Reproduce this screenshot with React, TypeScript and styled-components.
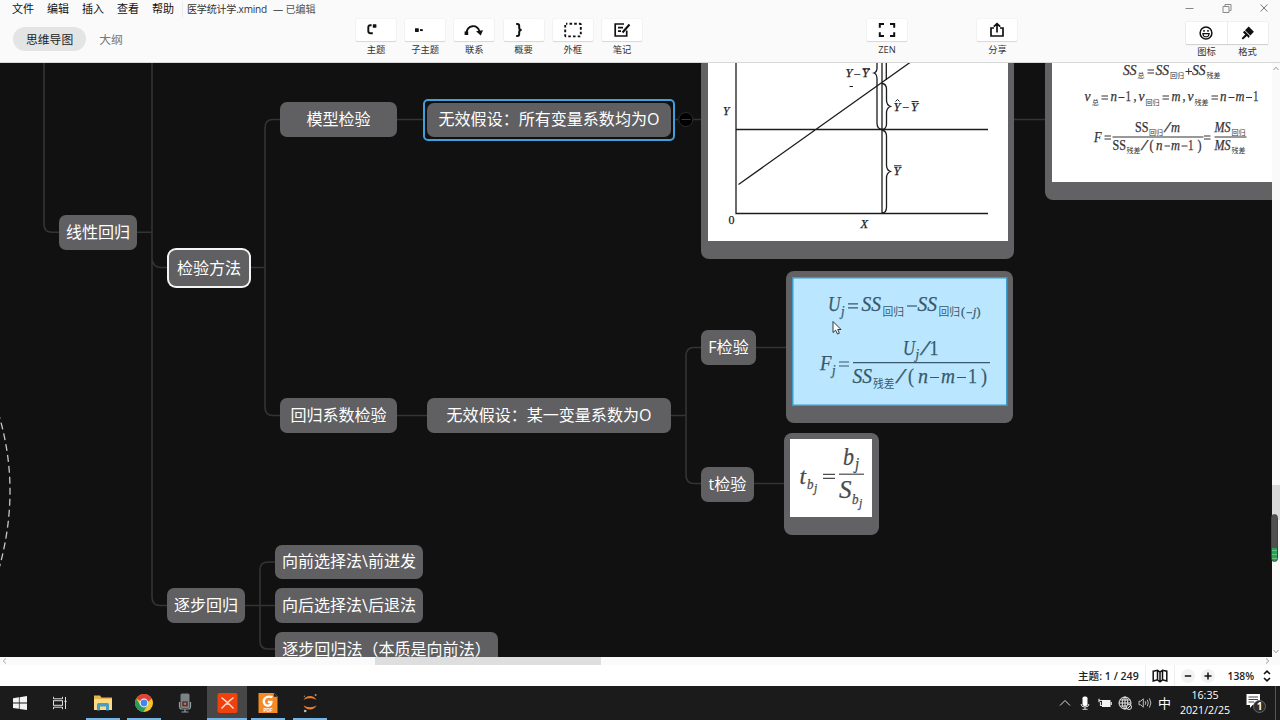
import React from "react";
import styled, { createGlobalStyle, css } from "styled-components";

const Global = createGlobalStyle`
  * { box-sizing: border-box; }
  body {
    margin: 0;
    background: #fff;
    overflow: hidden;
    font-family: "Open Sans", "Noto Sans CJK SC", sans-serif;
  }
  svg { display: block; flex: none; }
`;

const Window = styled.div`
  width: 1280px;
  height: 720px;
  display: flex;
  flex-direction: column;
  overflow: hidden;
  background: #fbfbfb;
`;

/* ---------- header ---------- */

const Header = styled.header`
  height: 63px;
  flex: none;
  display: flex;
  background: #fafafa;
  border-bottom: 1px solid #d9d9d9;
`;

const HeaderLeft = styled.div`
  width: 356px;
  display: flex;
  flex-direction: column;
`;

const MenuRow = styled.nav`
  height: 18px;
  padding-left: 12px;
  display: flex;
  align-items: center;
  gap: 13px;
  font-size: 11px;
  line-height: 16px;
  color: #111;
  white-space: nowrap;
`;

const MenuItem = styled.span`
  width: 22px;
`;

const FileTitle = styled.span`
  display: flex;
  gap: 6px;
  margin-left: -5px;
  padding-left: 4px;
  border-left: 1px solid #ececec;
  font-size: 10.1px;
  letter-spacing: -0.25px;
  color: #333;
`;

const Edited = styled.span`
  color: #555;
  letter-spacing: -0.1px;
`;

const TabRow = styled.div`
  display: flex;
  align-items: center;
  padding: 9px 0 0 13px;
`;

const Tab = styled.span<{ $active?: boolean }>`
  height: 24px;
  line-height: 24px;
  padding: 0 13px;
  border-radius: 12px;
  font-size: 11.8px;
  color: ${(p) => (p.$active ? "#1c1c1c" : "#777")};
  background: ${(p) => (p.$active ? "#e3e5e4" : "transparent")};
`;

const ToolGroup = styled.div<{ $ml?: number }>`
  display: flex;
  gap: 9.2px;
  padding-top: 19px;
  margin-left: ${(p) => p.$ml ?? 0}px;
`;

const Tool = styled.div`
  width: 40px;
  display: flex;
  flex-direction: column;
  align-items: center;
  gap: 2px;
`;

const ToolButton = styled.div`
  width: 40px;
  height: 22px;
  display: flex;
  align-items: center;
  justify-content: center;
  background: #fff;
  border-radius: 1px;
  box-shadow: 0 0 1px rgba(0, 0, 0, 0.22), 0 1px 1px rgba(0, 0, 0, 0.12);
`;

const ToolLabel = styled.span`
  font-size: 9.3px;
  line-height: 14px;
  color: #333;
  white-space: nowrap;
`;

const HeaderRight = styled.div`
  margin-left: auto;
  width: 99px;
  padding-right: 12px;
  display: flex;
  flex-direction: column;
`;

const WindowControls = styled.div`
  height: 22px;
  padding: 3px 0 0 4px;
  display: flex;
  justify-content: space-between;
  margin-right: -1px;
`;

const Pair = styled.div`
  width: 82px;
  height: 21.5px;
  margin-left: 5px;
  display: flex;
  background: #fff;
  box-shadow: 0 0 1px rgba(0, 0, 0, 0.22), 0 1px 1px rgba(0, 0, 0, 0.12);
`;

const PairCell = styled.div`
  flex: 1;
  display: flex;
  align-items: center;
  justify-content: center;
  & + & { border-left: 1px solid #ececec; }
`;

const PairLabels = styled.div`
  width: 82px;
  margin: 1px 0 0 5px;
  display: flex;
  justify-content: space-around;
`;

/* ---------- canvas ---------- */

const Main = styled.main`
  display: flex;
  height: 594px;
  flex: none;
`;

const Canvas = styled.div`
  position: relative;
  width: 1272px;
  height: 594px;
  overflow: hidden;
  background: #111;
`;

const Layer = styled.svg`
  position: absolute;
  left: 0;
  top: 0;
`;

type Box = { $x: number; $y: number; $w: number; $h: number };

const Node = styled.div<Box & { $ring?: "white" | "blue" }>`
  position: absolute;
  left: ${(p) => p.$x}px;
  top: ${(p) => p.$y - 63}px;
  width: ${(p) => p.$w}px;
  height: ${(p) => p.$h}px;
  display: flex;
  align-items: center;
  justify-content: center;
  border-radius: 7px;
  background: #606062;
  color: #fff;
  font-size: 16.05px;
  line-height: 24px;
  padding-bottom: 1px;
  white-space: nowrap;
  ${(p) => p.$ring === "white" && css`box-shadow: 0 0 0 2px #f4f4f4;`}
  ${(p) =>
    p.$ring === "blue" &&
    css`
      &::after {
        content: "";
        position: absolute;
        inset: -4px;
        border: 2px solid #3fa0dc;
        border-radius: 5px;
      }
    `}
`;

const PictureNode = styled.div<Box & { $pl?: number }>`
  position: absolute;
  left: ${(p) => p.$x}px;
  top: ${(p) => p.$y - 63}px;
  width: ${(p) => p.$w}px;
  height: ${(p) => p.$h}px;
  border-radius: 8px;
  background: #626264;
  padding: 6px 6px 0 ${(p) => p.$pl ?? 6.5}px;
`;

const VScroll = styled.div`
  width: 8px;
  display: flex;
  flex-direction: column;
  align-items: center;
  padding: 3px 0;
  background: #fafafa;
`;

const VThumb = styled.div`
  width: 8px;
  height: 35px;
  flex: none;
  margin: 414px 0 auto;
  background: #dadada;
`;

const Meter = styled.div`
  position: absolute;
  left: 1271px;
  top: 514px;
  width: 7px;
  height: 48px;
  border-radius: 4px;
  background: linear-gradient(#505050 0 33px, #2f9e55 33px 35px, #62c183 35px 36px, #2f9e55 36px 39px, #62c183 39px 40px, #2f9e55 40px 43px, #62c183 43px 44px, #2f9e55 44px);
  border: 1px solid #444;
`;

const HScroll = styled.div`
  height: 8px;
  flex: none;
  display: flex;
  align-items: center;
  justify-content: space-between;
  padding: 0 10px 0 2px;
  background: #fafafa;
`;

const HThumb = styled.div`
  width: 226px;
  height: 8px;
  margin-left: -297px;
  background: #dedede;
`;

/* ---------- status bar ---------- */

const StatusBar = styled.div`
  height: 21px;
  flex: none;
  display: flex;
  justify-content: flex-end;
  align-items: center;
  background: #fff;
  color: #222;
  font-size: 10.6px;
  font-weight: 600;
`;

const Count = styled.span`
  height: 21px;
  line-height: 22px;
  width: 68px;
  border-right: 1px solid #eee;
  white-space: nowrap;
`;

const CountLabel = styled.span`
  font-weight: 500;
`;

const MapCell = styled.span`
  width: 29px;
  height: 21px;
  display: flex;
  align-items: center;
  justify-content: center;
  border-right: 1px solid #eee;
`;

const Zoomer = styled.div`
  width: 105px;
  display: flex;
  align-items: center;
  padding-left: 6px;
`;

const Round = styled.span`
  width: 14px;
  height: 14px;
  margin-right: 6px;
  display: flex;
  align-items: center;
  justify-content: center;
  border-radius: 50%;
  background: #f2f2f2;
`;

const Percent = styled.span`
  width: 34px;
  margin-left: 6.5px;
  font-size: 10.3px;
`;

/* ---------- taskbar ---------- */

const Taskbar = styled.footer`
  height: 34px;
  flex: none;
  display: flex;
  background: #1b1b1b;
  color: #fff;
`;

const TaskButton = styled.div<{ $w: number; $ml?: number; $open?: boolean; $active?: boolean }>`
  width: ${(p) => p.$w}px;
  margin-left: ${(p) => p.$ml ?? 0}px;
  display: flex;
  align-items: center;
  justify-content: center;
  background: ${(p) => (p.$active ? "#474747" : "transparent")};
  border-bottom: 2px solid ${(p) => (p.$open ? "#76b5e6" : "transparent")};
  padding-top: 2px;
`;

const Tray = styled.div`
  margin-left: auto;
  display: flex;
  align-items: center;
`;

const TrayItem = styled.span<{ $w?: number }>`
  width: ${(p) => p.$w ?? 20}px;
  display: flex;
  justify-content: center;
  font-size: 13px;
  line-height: 20px;
`;

const Clock = styled.div`
  width: 62px;
  text-align: center;
  font-size: 10.6px;
  line-height: 15px;
`;

const Edge = styled.div`
  width: 5px;
  height: 34px;
  border-left: 1px solid #555;
`;

/* ---------- formula text ---------- */

type GlyphProps = {
  x: number;
  y: number;
  w: number;
  s: number;
  r?: boolean;
  cjk?: boolean;
  children: string;
};

const G = ({ x, y, w, s, r, cjk, children }: GlyphProps) => (
  <text
    x={x}
    y={y}
    fontSize={s}
    textLength={w}
    lengthAdjust="spacingAndGlyphs"
    fontStyle={r || cjk ? "normal" : "italic"}
    fontFamily={cjk ? '"Noto Sans CJK SC", sans-serif' : '"Liberation Serif", serif'}
    strokeWidth={cjk ? 0 : 0.25}
  >
    {children}
  </text>
);

const Eq = ({ x, y, w, g = 3 }: { x: number; y: number; w: number; g?: number }) => (
  <path d={`M${x} ${y - g / 2}h${w}M${x} ${y + g / 2}h${w}`} />
);

const Chart = () => (
  <svg width="300" height="178" viewBox="708 63 300 178">
    <rect x="708" y="63" width="300" height="178" fill="#fff" />
    <g fill="none" stroke="#1c1c1c" strokeWidth="1.3">
      <path d="M736 63V213.5H988M736 129.5H988M738.5 184.5L910 62.5M882 63V213.5" />
      <path d="M877 58V68Q877 72 874 73Q877 74 877 79V123Q877 129 882 129.5" />
      <path d="M886.3 63V80M882 83.5Q886.5 84 886.5 89V100Q886.5 105 890.5 106.5Q886.5 108 886.5 113V124Q886.5 129 882 129.5" />
      <path d="M882 130Q886.5 131 886.5 136V165Q886.5 170 890.5 171.5Q886.5 173 886.5 178V207Q886.5 213 882 213" />
      <path d="M862.5 68.7h7.5M911.5 101.6h7M894 165.8h7.5M849.5 86.5h3.5" strokeWidth="1" />
    </g>
    <g fill="#1c1c1c" stroke="#1c1c1c">
      <G x={723} y={114.5} w={6.5} s={12}>Y</G>
      <G x={728.5} y={224} w={6} s={12} r>0</G>
      <G x={860.5} y={228} w={7.5} s={12.5}>X</G>
      <G x={845.5} y={77.3} w={7} s={12}>Y</G>
      <G x={854.5} y={77} w={5.5} s={11} r>–</G>
      <G x={862} y={77.3} w={7} s={12}>Y</G>
      <G x={893.5} y={110.5} w={7} s={12}>Y</G>
      <G x={903} y={110.3} w={5.5} s={11} r>–</G>
      <G x={911} y={110.5} w={7} s={12}>Y</G>
      <G x={893.5} y={175} w={7} s={12}>Y</G>
    </g>
    <path d="M895.5 101.5l2-2 2 2" fill="none" stroke="#1c1c1c" strokeWidth="1" />
  </svg>
);

const Anova = () => (
  <svg width="221" height="119" viewBox="1051.5 63 221 119">
    <rect x="1051" y="63" width="222" height="119" fill="#fff" />
    <g fill="#333" stroke="#333" strokeWidth="1">
      <G x={1122.5} y={75} w={13.5} s={14.3}>SS</G>
      <G x={1137} y={78} w={7} s={7} cjk>总</G>
      <Eq x={1147} y={71.5} w={6.5} />
      <G x={1155} y={75} w={13.5} s={14.3}>SS</G>
      <G x={1169.5} y={78} w={14} s={7} cjk>回归</G>
      <path d="M1185 71.5h6.5M1188.2 68.2v6.5" />
      <G x={1191.5} y={75} w={13.5} s={14.3}>SS</G>
      <G x={1206} y={78} w={14} s={7} cjk>残差</G>

      <G x={1084} y={101} w={6} s={14}>ν</G>
      <G x={1091.5} y={104.5} w={7} s={7} cjk>总</G>
      <Eq x={1101} y={97.5} w={6.5} />
      <G x={1110} y={101} w={6.5} s={14}>n</G>
      <path d="M1118 97.5h6" />
      <G x={1125} y={101} w={5.5} s={14} r>1</G>
      <G x={1133} y={101} w={3} s={14} r>,</G>
      <G x={1138} y={101} w={6} s={14}>ν</G>
      <G x={1145} y={104.5} w={14} s={7} cjk>回归</G>
      <Eq x={1162} y={97.5} w={6.5} />
      <G x={1171} y={101} w={9} s={14}>m</G>
      <G x={1182} y={101} w={3} s={14} r>,</G>
      <G x={1187} y={101} w={6} s={14}>ν</G>
      <G x={1194} y={104.5} w={14} s={7} cjk>残差</G>
      <Eq x={1211} y={97.5} w={6.5} />
      <G x={1219.5} y={101} w={6.5} s={14}>n</G>
      <path d="M1228 97.5h6M1245.5 97.5h6" />
      <G x={1235} y={101} w={9} s={14}>m</G>
      <G x={1252.5} y={101} w={5.5} s={14} r>1</G>

      <G x={1093.5} y={141.5} w={7.5} s={14}>F</G>
      <Eq x={1104} y={137.5} w={6.5} />
      <G x={1134.5} y={132} w={13.5} s={13.8} r>SS</G>
      <G x={1148.5} y={135} w={14} s={7} cjk>回归</G>
      <G x={1164} y={132} w={5.5} s={14}>/</G>
      <G x={1170.5} y={132} w={9} s={14}>m</G>
      <path d="M1112 137h91M1214 137h32" />
      <G x={1112} y={149.5} w={13.5} s={13.8} r>SS</G>
      <G x={1126} y={153} w={14} s={7} cjk>残差</G>
      <G x={1141} y={149.5} w={5.5} s={14}>/</G>
      <G x={1149} y={149.5} w={4} s={14} r>(</G>
      <G x={1155.5} y={149.5} w={6.5} s={14}>n</G>
      <path d="M1164 146h5.5M1181 146h6" />
      <G x={1170.5} y={149.5} w={9} s={14}>m</G>
      <G x={1187.5} y={149.5} w={5.5} s={14} r>1</G>
      <G x={1197} y={149.5} w={4} s={14} r>)</G>
      <Eq x={1203.5} y={137.5} w={6.5} />
      <G x={1214} y={132} w={16} s={13.8}>MS</G>
      <G x={1231} y={135} w={14} s={7} cjk>回归</G>
      <G x={1214} y={149.5} w={16} s={13.8}>MS</G>
      <G x={1231} y={153} w={14} s={7} cjk>残差</G>
    </g>
  </svg>
);

const FTest = () => (
  <svg width="216" height="130" viewBox="792 277 216 130">
    <rect x="792.75" y="277.75" width="214" height="127.5" fill="#bae7ff" stroke="#3c9bcb" strokeWidth="1.5" />
    <g fill="#37596b" stroke="#37596b" strokeWidth="1.2">
      <G x={828} y={311} w={12.5} s={20.5}>U</G>
      <G x={841} y={315.5} w={3.6} s={14}>j</G>
      <Eq x={848} y={305.8} w={10} g={4} />
      <G x={861.5} y={311} w={19.5} s={20.5}>SS</G>
      <G x={882.5} y={315.5} w={21.5} s={10.8} cjk>回归</G>
      <path d="M907 306h10" />
      <G x={917.5} y={311} w={19.5} s={20.5}>SS</G>
      <G x={938.5} y={315.5} w={21.5} s={10.8} cjk>回归</G>
      <G x={961} y={316} w={4} s={12} r>(</G>
      <path d="M966.5 312.7h5.5" strokeWidth="1" />
      <G x={973} y={316} w={3.2} s={12}>j</G>
      <G x={976.5} y={316} w={4} s={12} r>)</G>

      <G x={820} y={369.5} w={11.5} s={20.5}>F</G>
      <G x={832} y={374.5} w={3.6} s={14}>j</G>
      <Eq x={839} y={364} w={10} g={4} />
      <path d="M853 362.7h137" />
      <G x={903} y={354.5} w={12} s={20.5}>U</G>
      <G x={915.5} y={359} w={3.6} s={14}>j</G>
      <G x={921} y={354.5} w={8} s={20}>/</G>
      <G x={929.5} y={354.5} w={9} s={20} r>1</G>
      <G x={852.5} y={382.5} w={19.5} s={20.5}>SS</G>
      <G x={873} y={388} w={21.5} s={10.8} cjk>残差</G>
      <G x={896.5} y={382.5} w={8} s={20}>/</G>
      <G x={908} y={382.5} w={6} s={20} r>(</G>
      <G x={918} y={382.5} w={10} s={20}>n</G>
      <path d="M930 377.5h9M957 377.5h9" />
      <G x={941} y={382.5} w={14} s={20}>m</G>
      <G x={968} y={382.5} w={9} s={20} r>1</G>
      <G x={981} y={382.5} w={6} s={20} r>)</G>
    </g>
  </svg>
);

const TTest = () => (
  <svg width="82" height="78" viewBox="790 439 82 78">
    <rect x="790" y="439" width="83" height="78" fill="#fff" />
    <g fill="#4a4a4a" stroke="#4a4a4a" strokeWidth="1.2">
      <G x={799.5} y={483.5} w={6.5} s={23}>t</G>
      <G x={807} y={489} w={6.5} s={14.5}>b</G>
      <G x={814} y={492} w={3.3} s={12.5}>j</G>
      <Eq x={823} y={476.3} w={12} g={4} />
      <G x={843} y={464.5} w={11} s={24.5}>b</G>
      <G x={855} y={469} w={4.2} s={16}>j</G>
      <path d="M839 474.2h25" />
      <G x={839} y={497.5} w={12.5} s={25}>S</G>
      <G x={852} y={504} w={6.5} s={14.5}>b</G>
      <G x={859} y={507} w={3.3} s={12.5}>j</G>
    </g>
  </svg>
);

/* ---------- icons ---------- */

const Ico = ({ w = 20, h = 16, children }: { w?: number; h?: number; children: React.ReactNode }) => (
  <svg width={w} height={h} viewBox={`0 0 ${w} ${h}`} fill="none" stroke="#111" strokeWidth="1.7">
    {children}
  </svg>
);

const tools: [string, React.ReactNode][] = [
  ["主题", <Ico><path d="M5.6 3.2H4.2Q2.3 3.4 2.3 5.2V9Q2.3 11.2 4.4 11.2H6.8" strokeWidth="1.9" /><rect x="6.8" y="2.2" width="3.6" height="3.6" rx="0.5" fill="#111" stroke="none" /></Ico>],
  ["子主题", <Ico><rect x="0" y="6.2" width="3.8" height="3.8" rx="0.4" fill="#111" stroke="none" /><path d="M5 8.1h2.8" strokeWidth="1.9" /></Ico>],
  ["联系", <Ico><path d="M2.5 11C3.5 2.5 13 2 15.6 9.5" strokeWidth="1.8" /><rect x="0.6" y="9.4" width="3.6" height="3.6" fill="#111" stroke="none" /><path d="M12 9.3L19 8.2L16.7 13.6Z" fill="#111" stroke="none" /></Ico>],
  ["概要", <Ico><path d="M2.2 1.9H3.4Q5.2 1.9 5.2 3.9V5.7Q5.2 7.9 7.6 7.9Q5.2 7.9 5.2 10.1V12Q5.2 14 3.4 14H2.2" strokeWidth="2" /></Ico>],
  ["外框", <Ico><rect x="2.2" y="1.8" width="15.6" height="12.6" rx="0.8" strokeWidth="1.9" strokeDasharray="2.6 2.1" strokeDashoffset="1.2" /></Ico>],
  ["笔记", <Ico><path d="M12 2H3.2V14H14.7V8.5M6 5.6H11M6 9.2H9" /><path d="M17.5 2.5L10.5 10.5" strokeWidth="2" /></Ico>],
];

const Win = () => (
  <svg width="16" height="16" viewBox="0 0 16 16" fill="#f4f4f4">
    <path d="M1 3.2L6.9 2.3V7.6H1ZM7.6 2.2L15 1.1V7.6H7.6ZM1 8.4H6.9V13.8L1 12.9ZM7.6 8.4H15V15L7.6 13.9Z" />
  </svg>
);

const TaskView = () => (
  <svg width="16" height="14" viewBox="0 0 16 14" fill="none" stroke="#ddd">
    <path d="M1.5 0.8V2.8H10.5V0.8M1.5 13.2V11.2H10.5V13.2" />
    <rect x="1.5" y="4.7" width="9" height="4.6" />
    <path d="M13.5 1V13M12.4 5.4h2.3" />
  </svg>
);

const Folder = () => (
  <svg width="20" height="18" viewBox="0 0 20 18">
    <path d="M1 1.5H7L8.5 3.5H19V16H1Z" fill="#e9b44c" />
    <path d="M1 5H19V16H1Z" fill="#fbdc82" />
    <path d="M4 16.5V10.5Q4 9 5.5 9H14.5Q16 9 16 10.5V16.5H13V12.5H7V16.5Z" fill="#4a9ccb" />
  </svg>
);

const Chrome = () => (
  <svg width="18" height="18" viewBox="0 0 18 18">
    <circle cx="9" cy="9" r="9" fill="#f6c52e" />
    <path d="M9 9L1.2 4.5A9 9 0 0 1 16.8 4.5Z" fill="#dc4437" />
    <path d="M1.2 4.5A9 9 0 0 0 8.4 18L12.5 11L9 9L5.2 11Z" fill="#279b57" />
    <path d="M9 4.6H16.8L12 9Z" fill="#dc4437" />
    <circle cx="9" cy="9" r="4.4" fill="#fff" />
    <circle cx="9" cy="9" r="3.4" fill="#4486ef" />
  </svg>
);

const Recorder = () => (
  <svg width="14" height="20" viewBox="0 0 14 20">
    <rect x="2.5" y="0.5" width="9" height="14.5" rx="1.5" fill="#7b8288" />
    <path d="M1.5 9V13.5Q1.5 16 4 16H10Q12.5 16 12.5 13.5V9M7 16V19M3.5 19H10.5" fill="none" stroke="#989da1" strokeWidth="1.2" />
    <rect x="4.3" y="8.3" width="5.4" height="5" fill="#4a3430" />
    <circle cx="7" cy="10.8" r="1.4" fill="#e2603c" />
  </svg>
);

const XMind = () => (
  <svg width="21" height="20" viewBox="0 0 21 20">
    <rect x="0.5" width="20" height="20" rx="2" fill="#f0410c" />
    <path d="M4.5 4.5L10.5 9.5L16.5 4.5M4.5 15.5L9 11H12L16.5 15.5" fill="none" stroke="#ffe4d6" strokeWidth="1.4" />
  </svg>
);

const Foxit = () => (
  <svg width="20" height="20" viewBox="0 0 20 20">
    <path d="M0.5 0H16L19.5 3.5V20H0.5Z" fill="#f48b27" />
    <path d="M15.8 0L19.5 3.8H15.8Z" fill="#222" />
    <path d="M14.5 4.2C8 2 4.5 6.5 6.3 10.5C8 14 13.2 13.2 13.4 9H9.8" fill="none" stroke="#fff" strokeWidth="2.3" />
    <text x="10" y="18.6" textAnchor="middle" fontSize="4.6" fontWeight="bold" fontFamily="Liberation Sans, sans-serif" fill="#fff">PDF</text>
  </svg>
);

const Jupyter = () => (
  <svg width="16" height="20" viewBox="0 0 16 20">
    <path d="M1.5 7.2C4 1.6 12 1.6 14.5 7.2C11.5 4.6 4.5 4.6 1.5 7.2Z" fill="#ef7b2c" />
    <path d="M1.5 12.2C4 18 12 18 14.5 12.2C11.5 14.8 4.5 14.8 1.5 12.2Z" fill="#ef7b2c" />
    <circle cx="13.6" cy="2" r="1" fill="#999" />
    <circle cx="2.4" cy="3.2" r="0.7" fill="#888" />
    <circle cx="3.2" cy="18" r="1.3" fill="#bbb" />
  </svg>
);

const App = () => (
  <>
    <Global />
    <Window>
      <Header>
        <HeaderLeft>
          <MenuRow>
            {["文件", "编辑", "插入", "查看", "帮助"].map((m) => (
              <MenuItem key={m}>{m}</MenuItem>
            ))}
            <FileTitle>
              <span>医学统计学.xmind</span>
              <Edited>— 已编辑</Edited>
            </FileTitle>
          </MenuRow>
          <TabRow>
            <Tab $active>思维导图</Tab>
            <Tab>大纲</Tab>
          </TabRow>
        </HeaderLeft>
        <ToolGroup>
          {tools.map(([label, icon]) => (
            <Tool key={label}>
              <ToolButton>{icon}</ToolButton>
              <ToolLabel>{label}</ToolLabel>
            </Tool>
          ))}
        </ToolGroup>
        <ToolGroup $ml={225}>
          <Tool>
            <ToolButton>
              <Ico><path d="M2.8 5.8V2H7M13 2H17.2V5.8M17.2 10.2V14H13M7 14H2.8V10.2" strokeWidth="2" /></Ico>
            </ToolButton>
            <ToolLabel>ZEN</ToolLabel>
          </Tool>
        </ToolGroup>
        <ToolGroup $ml={70.5}>
          <Tool>
            <ToolButton>
              <Ico><path d="M7 6H4V14H16V6H13M10 10.5V2M6.8 4.6L10 1.6L13.2 4.6" /></Ico>
            </ToolButton>
            <ToolLabel>分享</ToolLabel>
          </Tool>
        </ToolGroup>
        <HeaderRight>
          <WindowControls>
            <svg width="9" height="10" viewBox="0 0 9 10" stroke="#888"><path d="M0.5 5.5h8" /></svg>
            <svg width="10" height="10" viewBox="0 0 10 10" fill="none" stroke="#888"><path d="M1 3.5H7V9.5H1ZM3 3V1.5H9V7.5H7.5" /></svg>
            <svg width="10" height="10" viewBox="0 0 10 10" stroke="#777"><path d="M1.5 1.5L8.5 8.5M8.5 1.5L1.5 8.5" /></svg>
          </WindowControls>
          <Pair>
            <PairCell>
              <Ico w={16}><circle cx="8" cy="8" r="5.9" strokeWidth="1.5" /><path d="M4.8 8.6H11.2Q10.8 11.8 8 11.8Q5.2 11.8 4.8 8.6Z" strokeWidth="1.1" /><path d="M6 5v1.8M10 5v1.8" strokeWidth="1.5" /></Ico>
            </PairCell>
            <PairCell>
              <Ico w={16}>
                <path d="M8.7 1.6L13.9 6.8L10.4 10.6L5 5.2ZM4.6 5.8L9.8 11L8.8 13L6.9 11L3 14.6L1.6 13.2L5.2 9.4L2.9 7.2Z" fill="#111" stroke="none" />
              </Ico>
            </PairCell>
          </Pair>
          <PairLabels>
            <ToolLabel>图标</ToolLabel>
            <ToolLabel>格式</ToolLabel>
          </PairLabels>
        </HeaderRight>
      </Header>

      <Main>
        <Canvas>
          <Layer width="1272" height="594" viewBox="0 63 1272 594" fill="none" stroke="#343434" strokeWidth="1.6">
            <path d="M44 63V224Q44 232.3 52 232.3H59M137 232.3H152M152 63V597Q152 605.5 160 605.5H167M152 259Q153 267.5 161 267.5H167" />
            <path d="M251 267.5H265M280 119.5H273Q265 119.5 265 128V407Q265 415.5 273 415.5H280M397 119.5H423M397 415.5H427" />
            <path d="M674 119.5H701M1014 119.5H1045M671 415.5H686M701 347.5H694Q686 347.5 686 356V475Q686 483.5 694 483.5H701M756 347.5H787M754 483.5H785" />
            <path d="M245 605.5H275M275 562H268Q260 562 260 570V641Q260 649 268 649H275" />
            <path d="M-2 412Q22 490 -2 572" stroke="#c8c8c8" strokeWidth="1.3" strokeDasharray="7 4" />
            <circle cx="685.8" cy="119.5" r="7" fill="#000" stroke="#2b2b2b" strokeWidth="1" />
            <path d="M681.5 119.5h9" stroke="#3a3a3a" strokeWidth="1" />
          </Layer>
          <Node $x={280} $y={102} $w={117} $h={35}>模型检验</Node>
          <Node $x={427} $y={102.5} $w={244} $h={34} $ring="blue">无效假设：所有变量系数均为O</Node>
          <Node $x={59} $y={215} $w={78} $h={34.5}>线性回归</Node>
          <Node $x={169} $y={250} $w={80} $h={36} $ring="white">检验方法</Node>
          <Node $x={280} $y={398} $w={117} $h={35}>回归系数检验</Node>
          <Node $x={427} $y={398} $w={244} $h={35}>无效假设：某一变量系数为O</Node>
          <Node $x={701} $y={330} $w={55} $h={34.5}>F检验</Node>
          <Node $x={701} $y={467} $w={53} $h={34.5}>t检验</Node>
          <Node $x={167} $y={588} $w={78} $h={35}>逐步回归</Node>
          <Node $x={275} $y={544.5} $w={148} $h={34.5}>向前选择法\前进发</Node>
          <Node $x={275} $y={588} $w={148} $h={35}>向后选择法\后退法</Node>
          <Node $x={275} $y={632} $w={223} $h={35}>逐步回归法（本质是向前法）</Node>
          <PictureNode $x={701} $y={57} $w={313} $h={202}><Chart /></PictureNode>
          <PictureNode $x={1045} $y={57} $w={240} $h={142.5}><Anova /></PictureNode>
          <PictureNode $x={786} $y={271} $w={227} $h={152} $pl={6}><FTest /></PictureNode>
          <PictureNode $x={784} $y={433} $w={95} $h={102} $pl={6}><TTest /></PictureNode>
          <Layer width="1272" height="594" viewBox="0 63 1272 594">
            <path d="M833 321.5V332.5L835.6 330.2L837.5 334L839.4 333.2L837.7 329.5H841Z" fill="#fff" stroke="#222" strokeWidth="0.9" />
          </Layer>
        </Canvas>
        <VScroll>
          <svg width="6" height="5" viewBox="0 0 6 5" fill="none" stroke="#999"><path d="M0.5 4L3 1.2L5.5 4" /></svg>
          <VThumb />
          <svg width="6" height="5" viewBox="0 0 6 5" fill="none" stroke="#999"><path d="M0.5 1L3 3.8L5.5 1" /></svg>
        </VScroll>
      </Main>
      <Meter />
      <HScroll>
        <svg width="5" height="6" viewBox="0 0 5 6" fill="none" stroke="#aaa"><path d="M4 0.5L1.2 3L4 5.5" /></svg>
        <HThumb />
        <svg width="5" height="6" viewBox="0 0 5 6" fill="none" stroke="#999"><path d="M1 0.5L3.8 3L1 5.5" /></svg>
      </HScroll>
      <StatusBar>
        <Count><CountLabel>主题</CountLabel>: 1 / 249</Count>
        <MapCell>
          <svg width="16" height="14" viewBox="0 0 16 14" fill="none" stroke="#111" strokeWidth="1.5">
            <path d="M1.2 2.2L5.5 1.2L8 3.2L10.5 1.2L14.8 2.2V12L10.5 10.8L8 12.8L5.5 10.8L1.2 12ZM5.5 1.2V10.8M8 3.2V12.8M10.5 1.2V10.8" />
          </svg>
        </MapCell>
        <Zoomer>
          <Round><svg width="8" height="8" viewBox="0 0 8 8" stroke="#111" strokeWidth="1.5"><path d="M0.8 4h6.4" /></svg></Round>
          <Round><svg width="8" height="8" viewBox="0 0 8 8" stroke="#111" strokeWidth="1.5"><path d="M0.5 4h7M4 0.5v7" /></svg></Round>
          <Percent>138%</Percent>
          <svg width="10" height="14" viewBox="0 0 10 14" fill="none" stroke="#111" strokeWidth="1.6"><path d="M2 5L5 2.2L8 5M2 9L5 11.8L8 9" /></svg>
        </Zoomer>
      </StatusBar>

      <Taskbar>
        <TaskButton $w={40}><Win /></TaskButton>
        <TaskButton $w={40}><TaskView /></TaskButton>
        <TaskButton $w={34} $ml={6} $open><Folder /></TaskButton>
        <TaskButton $w={34} $ml={7} $open><Chrome /></TaskButton>
        <TaskButton $w={34} $ml={7}><Recorder /></TaskButton>
        <TaskButton $w={40} $ml={5} $open $active><XMind /></TaskButton>
        <TaskButton $w={34} $ml={4} $open><Foxit /></TaskButton>
        <TaskButton $w={34} $ml={8} $open><Jupyter /></TaskButton>
        <Tray>
          <TrayItem><svg width="12" height="8" viewBox="0 0 12 8" fill="none" stroke="#ddd"><path d="M1 6.5L6 1.5L11 6.5" /></svg></TrayItem>
          <TrayItem><svg width="10" height="14" viewBox="0 0 10 14"><rect x="2.5" y="0.5" width="5" height="9.5" rx="1.8" fill="#fff" /><path d="M1 8Q1 11 5 11Q9 11 9 8M5 11V13M2.5 13.3h5" fill="none" stroke="#ddd" /></svg></TrayItem>
          <TrayItem><svg width="14" height="10" viewBox="0 0 14 10"><rect x="4" y="2" width="8.5" height="7" fill="#f4f4f4" /><path d="M13.3 4v3M0.5 2.5H4M1 0.8V4.2M2.5 4V7.5H4" fill="none" stroke="#ddd" strokeWidth="1.2" /></svg></TrayItem>
          <TrayItem><svg width="14" height="14" viewBox="0 0 14 14" fill="none" stroke="#e8e8e8"><circle cx="7" cy="7" r="6" /><ellipse cx="7" cy="7" rx="2.8" ry="6" /><path d="M1 7H13M2 4H12M2 10H9M7 1V13" /><circle cx="11" cy="11" r="2.5" fill="#1b1b1b" /><path d="M9.4 12.6L12.6 9.4" /></svg></TrayItem>
          <TrayItem><svg width="14" height="12" viewBox="0 0 14 12" fill="none" stroke="#bbb"><path d="M1 4.2H2.8L5.3 1.8V10.2L2.8 7.8H1ZM7.2 4.2Q8.4 6 7.2 7.8M9.3 2.8Q11.2 6 9.3 9.2M11.4 1.4Q14.4 6 11.4 10.6" /></svg></TrayItem>
          <TrayItem $w={19}>中</TrayItem>
          <Clock>16:35<br />2021/2/25</Clock>
          <TrayItem $w={39}>
            <svg width="22" height="22" viewBox="0 0 22 22">
              <path d="M1.5 2H15V13H7.5L5 16V13H1.5Z" fill="#fff" />
              <path d="M3.5 5H13M3.5 7.5H13M3.5 10H9" stroke="#444" />
              <circle cx="14.5" cy="14.5" r="6" fill="#2c2c2c" stroke="#666" />
              <text x="14.5" y="18.2" fontSize="10" fontWeight="bold" fill="#fff" textAnchor="middle">1</text>
            </svg>
          </TrayItem>
          <Edge />
        </Tray>
      </Taskbar>
    </Window>
  </>
);

export default App;
